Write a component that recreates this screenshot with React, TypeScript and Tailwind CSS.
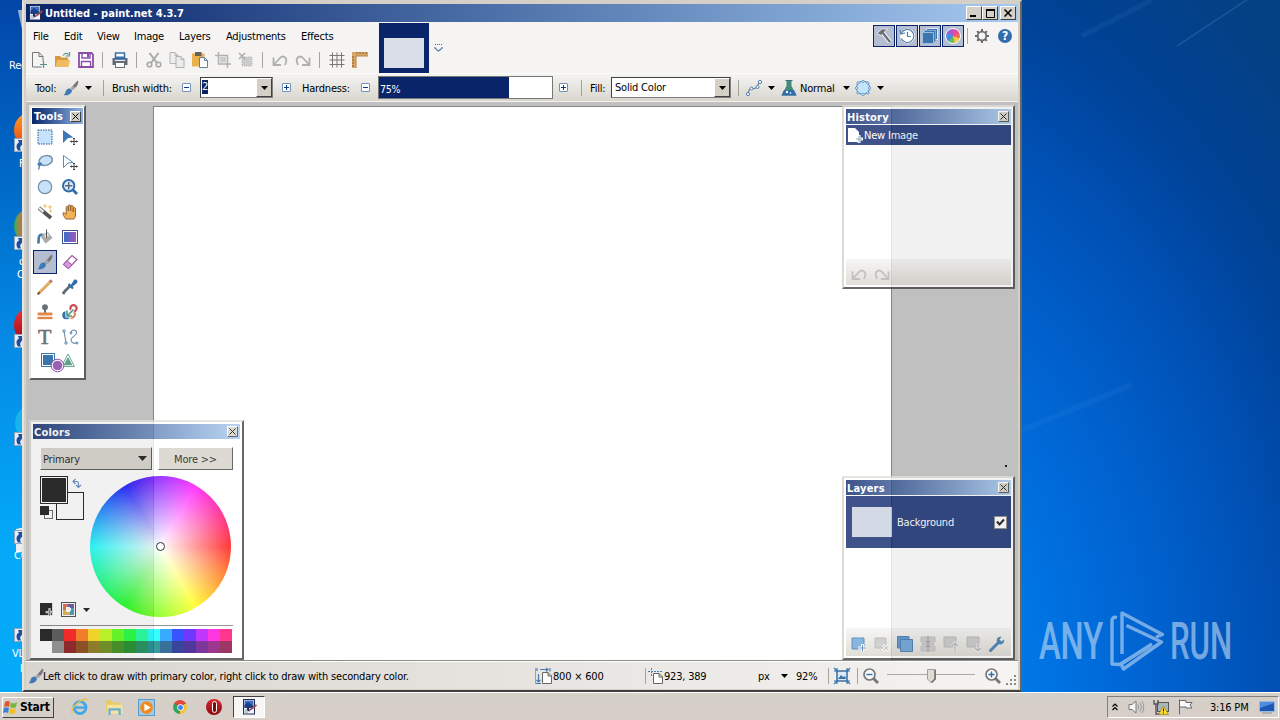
import type { ReactNode } from "react";

type IconProps = { children: ReactNode; size?: number; className?: string };

function Icon({ children, size = 16, className = "" }: IconProps) {
  return (
    <svg width={size} height={size} viewBox="0 0 16 16" fill="none" className={`shrink-0 overflow-visible ${className}`}>
      {children}
    </svg>
  );
}

/* ---------- shared icons ---------- */

function BrushIcon() {
  return (
    <Icon>
      <path d="M8 8 L14.5 0.5 L15.5 2 L14 6 L9.8 10 Z" fill="#77777a" />
      <path d="M8.2 8.2 L10 6 L12 8 L9.8 10 Z" fill="#a9a9a9" />
      <path d="M0.5 15 C3 14 2 9 6 8.5 C9 8.5 9.8 11 8 13 C6 15.4 3 15.6 0.5 15 Z" fill="#3f7ab5" />
    </Icon>
  );
}

function UndoIcon() {
  return (
    <Icon>
      <path d="M1.5 5.5 V13 H9 M2 12.5 L8 6 C11 2.8 15 5.5 14.2 9.5 L13 13" stroke="#b0b0b0" strokeWidth="1.8" />
    </Icon>
  );
}

function RedoIcon() {
  return (
    <Icon>
      <path d="M14.5 5.5 V13 H7 M14 12.5 L8 6 C5 2.8 1 5.5 1.8 9.5 L3 13" stroke="#b0b0b0" strokeWidth="1.8" />
    </Icon>
  );
}

function PaintLogo() {
  return (
    <Icon>
      <rect x="2.5" y="0.5" width="11" height="14.5" fill="#f4f6fb" stroke="#222c50" />
      <rect x="3.5" y="1.5" width="9" height="7.5" fill="#3f6fc0" />
      <path d="M3.5 6 L7 3 L12.5 7 V9 H3.5 Z" fill="#1d3f86" />
      <path d="M3.5 11 H8 M3.5 13 H7" stroke="#8d97b5" />
      <path d="M6 9 C8 8 9 10 8.5 12.5 C7 12.5 5.5 11 6 9 Z" fill="#182a5c" />
      <path d="M9 11 L15.5 6" stroke="#a24a4a" strokeWidth="1.6" />
    </Icon>
  );
}

function Arrow() {
  return (
    <svg width="7" height="4" viewBox="0 0 7 4" className="shrink-0">
      <path d="M0 0 H7 L3.5 4 Z" fill="#000" />
    </svg>
  );
}

function Step({ plus = false }: { plus?: boolean }) {
  return (
    <svg width="9" height="9" viewBox="0 0 9 9" className="shrink-0">
      <rect x="0.5" y="0.5" width="8" height="8" rx="0.5" fill="#fff" stroke="#7191c0" />
      <path d={plus ? "M2 4.5 H7 M4.5 2 V7" : "M2 4.5 H7"} stroke="#123a7c" />
    </svg>
  );
}

function Sep() {
  return <div className="flex w-[11px] shrink-0 justify-center"><div className="h-4 w-px bg-[#a5a29b]" /></div>;
}

function Cell({ children }: { children: ReactNode }) {
  return <div className="flex w-[23px] shrink-0 justify-center">{children}</div>;
}

function CloseBox() {
  return (
    <div className="flex size-[11px] shrink-0 items-center justify-center border border-t-white border-l-white border-r-[#404040] border-b-[#404040] bg-[#d4d0c8]">
      <svg width="7" height="7" viewBox="0 0 7 7"><path d="M0.5 0.5 L6.5 6.5 M6.5 0.5 L0.5 6.5" stroke="#000" /></svg>
    </div>
  );
}

/* ---------- top tool bar ---------- */

const menus = [
  { label: "File", width: "w-[31px]" },
  { label: "Edit", width: "w-[33px]" },
  { label: "View", width: "w-[37px]" },
  { label: "Image", width: "w-[45px]" },
  { label: "Layers", width: "w-[47px]" },
  { label: "Adjustments", width: "w-[75px]" },
  { label: "Effects", width: "w-[50px]" },
];

function FileBar() {
  return (
    <div className="flex h-[26px] items-center pl-[2px]">
      <Cell><Icon className="-ml-px"><path d="M10.5 15 H1.5 V0.5 H8 L12 4.5 V9 M8 0.5 V4.5 H12" fill="none" stroke="#777" /><path d="M12.5 9 V16 M9 12.5 H16" stroke="#5f9090" strokeWidth="1.2" /></Icon></Cell>
      <Cell><Icon><path d="M0 4 H5 L6.5 5.5 H13 V15 H0 Z" fill="#d9983c" /><path d="M2 8 H15 L13.5 15 H0.5 Z" fill="#f0bb62" /><path d="M8 3.5 C10 0.8 12 1 13.5 2.5 M14.5 0 V4 H10.5" stroke="#5d9a92" strokeWidth="1.2" /></Icon></Cell>
      <Cell><Icon><path d="M1 1 H13.5 L15 2.5 V15 H1 Z" fill="#fff" stroke="#8b4ca8" strokeWidth="1.8" /><path d="M4 1 V6 H12 V1 M3.5 15 V9.5 H12.5 V15" stroke="#8b4ca8" strokeWidth="1.4" /><path d="M9 2 H11 V5 H9 Z" fill="#8b4ca8" /></Icon></Cell>
      <Sep />
      <Cell><Icon><path d="M0.5 6 H3 V9 H13 V6 H15.5 V13 H0.5 Z" fill="#646b74" /><path d="M3.5 7 V1 H12.5 V7 Z" fill="#fff" stroke="#3a70a8" strokeWidth="1.5" /><path d="M3.5 6 H12.5" stroke="#3a70a8" strokeWidth="3" /><rect x="3.5" y="10.5" width="9" height="5" fill="#fff" stroke="#646b74" /></Icon></Cell>
      <Sep />
      <Cell><Icon><path d="M3.5 1 L11 11 M12.5 1 L5 11" stroke="#a8a8a8" strokeWidth="2" /><circle cx="3.5" cy="12.5" r="2.3" stroke="#a8a8a8" strokeWidth="1.6" /><circle cx="12.5" cy="12.5" r="2.3" stroke="#a8a8a8" strokeWidth="1.6" /></Icon></Cell>
      <Cell><Icon><path d="M1 0.5 H6 L9 3.5 V11.5 H1 Z M6 0.5 V3.5 H9" fill="#eee" stroke="#b4b4b4" /><path d="M7 4.5 H12 L15 7.5 V15.5 H7 Z M12 4.5 V7.5 H15" fill="#ececec" stroke="#b0b0b0" /></Icon></Cell>
      <Cell><Icon><rect y="1.5" width="12.5" height="13" fill="#eab24e" /><path d="M3 0 H9.5 V4 H3 Z" fill="#65615b" /><path d="M7.5 5.5 H12.5 L15.5 8.5 V15.5 H7.5 Z M12.5 5.5 V8.5 H15.5" fill="#fff" stroke="#64819d" /></Icon></Cell>
      <Cell><Icon><path d="M3.5 0 V12 H16 M0 3.5 H12.5 V16" stroke="#b0b0b0" strokeWidth="1.5" /><rect x="5" y="5" width="6" height="5.5" fill="#ccc" /></Icon></Cell>
      <Cell><Icon><rect x="4" y="5" width="10" height="9" fill="#ccc" stroke="#b5b5b5" strokeDasharray="1 1" /><path d="M1 1 L7 7 M7 1 L1 7" stroke="#adadad" strokeWidth="1.5" /></Icon></Cell>
      <Sep />
      <Cell><UndoIcon /></Cell>
      <Cell><RedoIcon /></Cell>
      <Sep />
      <Cell><Icon><path d="M3.5 0.5 V15.5 M8 0.5 V15.5 M12.5 0.5 V15.5 M0.5 3.5 H15.5 M0.5 8 H15.5 M0.5 12.5 H15.5" stroke="#777" /></Icon></Cell>
      <Cell><Icon><path d="M0 0 H16 V4 H4 V16 H0 Z" fill="#dca766" /><path d="M5 0 V2 M8 0 V2 M11 0 V2 M14 0 V2 M0 5 H2 M0 8 H2 M0 11 H2 M0 14 H2" stroke="#7b5936" /><path d="M4 16 V4 H16" stroke="#b88243" /></Icon></Cell>
    </div>
  );
}

function PanelToggles() {
  const box = "flex size-[22px] items-center justify-center border border-[#0a246a] bg-[#b5bdd3]";
  return (
    <div className="flex h-[26px] items-center pt-[1px]">
      <div className="flex gap-px">
        <div className={box}><Icon><path d="M6 4 L14 14" stroke="#fff" strokeWidth="4.4" /><path d="M0.8 5.5 L6 0.8 L11.5 1 L5 7.5 Z" fill="#707173" stroke="#fff" strokeWidth="0.8" /><path d="M6 4 L14 14" stroke="#68727e" strokeWidth="2.4" /></Icon></div>
        <div className={box}><Icon><circle cx="8.5" cy="8" r="6.5" fill="#fff" stroke="#fff" strokeWidth="2" /><path d="M2.5 5 A6.5 6.5 0 1 1 2.3 10.5 M1 2 L2 6 L6 5 M8.5 4 V8.5 H12" stroke="#5480ae" strokeWidth="1.2" /></Icon></div>
        <div className={box}><Icon><path d="M4.5 0.5 H15.5 V11.5 H4.5 Z" fill="#3b75ae" stroke="#dfeaf6" /><path d="M2.5 2.5 H13.5 V13.5 H2.5 Z" fill="#3b75ae" stroke="#7faad3" /><path d="M0.5 4.5 H11.5 V15.5 H0.5 Z" fill="#3b75ae" stroke="#9dbedd" /></Icon></div>
        <div className={box}>
          <div className="size-4 rounded-full border border-white bg-[conic-gradient(#e94a9a_0_60deg,#f2685d_60deg_110deg,#f5c84a_110deg_165deg,#65bd62_165deg_220deg,#438fe0_220deg_290deg,#a55bd1_290deg)]" />
        </div>
      </div>
      <div className="ml-[3px] h-4 w-px bg-[#aaa]" />
      <Icon className="ml-[6px]">
        <circle cx="8" cy="8" r="4.3" stroke="#6c6c6c" strokeWidth="1.8" />
        <path d="M8 1 V3.8 M8 12.2 V15 M1 8 H3.8 M12.2 8 H15 M3.1 3.1 L5 5 M11 11 L12.9 12.9 M12.9 3.1 L11 5 M5 11 L3.1 12.9" stroke="#6c6c6c" strokeWidth="2" />
      </Icon>
      <div className="ml-[8px] flex size-[14px] items-center justify-center rounded-full bg-[#2f6dac] text-[12px] leading-none font-bold text-white">?</div>
    </div>
  );
}

function OptionsBar() {
  const combo = "flex h-[21px] border border-[#808080] border-t-[#404040] border-l-[#404040] bg-white";
  const drop = "flex w-4 items-center justify-center border border-t-white border-l-white border-r-[#404040] border-b-[#404040] bg-[#d4d0c8]";
  return (
    <div className="flex h-[28px] shrink-0 items-center border-t border-[#fcfcfb] bg-linear-to-b from-[#f5f4f2] to-[#d9d6ce] pl-[9px]">
      <span className="w-[28px]">Tool:</span>
      <BrushIcon />
      <div className="ml-[6px] flex w-[13px]"><Arrow /></div>
      <Sep />
      <span className="ml-[3px] w-[70px]">Brush width:</span>
      <Step />
      <div className={`${combo} ml-[9px] w-[73px]`}>
        <div className="flex flex-1 items-start pt-[2px] pl-[1px]"><div className="h-[14px] bg-[#0a246a] text-white">2</div></div>
        <div className={drop}><Arrow /></div>
      </div>
      <div className="ml-[9px]"><Step plus /></div>
      <span className="ml-[11px] w-[59px]">Hardness:</span>
      <Step />
      <div className="ml-[8px] flex h-[23px] w-[175px] border border-[#777]">
        <div className="flex w-[130px] items-center bg-[#0a246a] pl-[1px] text-[10.5px] text-white"><span>75%</span></div>
        <div className="flex-1 bg-white" />
      </div>
      <div className="ml-[6px]"><Step plus /></div>
      <div className="ml-[8px]"><Sep /></div>
      <span className="ml-[3px] w-[21px]">Fill:</span>
      <div className={`${combo} w-[120px]`}>
        <div className="flex-1 pl-[3px] leading-[20px]">Solid Color</div>
        <div className={drop}><Arrow /></div>
      </div>
      <div className="ml-[2px]"><Sep /></div>
      <Icon className="ml-[2px]"><path d="M2 13.5 C3 7 6 9 8.5 8.5 C12 8 11 4 14 2" stroke="#777" strokeWidth="1.2" /><circle cx="2" cy="14" r="1.6" fill="#fff" stroke="#4b80b6" /><circle cx="5.5" cy="8.5" r="1.5" fill="#fff" stroke="#4b80b6" /><circle cx="11.5" cy="7" r="1.5" fill="#fff" stroke="#4b80b6" /><circle cx="14" cy="2" r="1.6" fill="#fff" stroke="#4b80b6" /></Icon>
      <div className="ml-[6px] flex w-[13px]"><Arrow /></div>
      <Icon><path d="M5.5 0.5 H10.5 V6 L15.5 15.5 H0.5 L5.5 6 Z" fill="#438b78" /><path d="M3 10 H13 L15.5 15.5 H0.5 Z" fill="#2f6dac" /><path d="M4.5 0.5 H11.5" stroke="#3f6d8b" /><circle cx="6" cy="12" r="1.2" fill="#fff" /><circle cx="9.5" cy="13" r="0.9" fill="#c5def6" /></Icon>
      <span className="ml-[3px] w-[43px]">Normal</span>
      <Arrow />
      <Icon className="ml-[5px]"><path d="M3 2.5 L8 1 L13 2.5 L15 8 L13 13 L8 14.5 L3 13 L1 8 Z" fill="#c4e4fb" stroke="#4985ba" /><g fill="#e7f4ff" stroke="#4985ba" strokeWidth="0.7"><circle cx="3" cy="3" r="1.2" /><circle cx="8" cy="1.5" r="1.2" /><circle cx="13" cy="3" r="1.2" /><circle cx="14.5" cy="8" r="1.2" /><circle cx="13" cy="13" r="1.2" /><circle cx="8" cy="14.5" r="1.2" /><circle cx="3" cy="13" r="1.2" /><circle cx="1.5" cy="8" r="1.2" /></g></Icon>
      <div className="ml-[6px]"><Arrow /></div>
    </div>
  );
}

/* ---------- tool window ---------- */

const moveCross = (
  <path d="M12 9 V16 M8.5 12.5 H15.5 M11 10 L12 9 L13 10 M11 15 L12 16 L13 15 M9.5 11.5 L8.5 12.5 L9.5 13.5 M14.5 11.5 L15.5 12.5 L14.5 13.5" stroke="#333" strokeWidth="0.9" />
);

const toolIcons: ReactNode[] = [
  <rect x="1" y="1" width="14" height="14" fill="#c7e3fb" stroke="#24578c" strokeDasharray="1.5 1" />,
  <><path d="M1 1 L11.5 8.5 L6 9 L1 14 Z" fill="#3b78b4" />{moveCross}</>,
  <><ellipse cx="8.7" cy="6.5" rx="6.8" ry="4.8" transform="rotate(-15 8.7 6.5)" fill="#c7e3fb" stroke="#7991aa" strokeWidth="1.5" /><path d="M4 9 C0 8.5 0 12 4 11 C6 10.5 3.5 8.5 2.5 10 C2 12 3 13 1.5 15.5" stroke="#4b7fb4" strokeWidth="1.3" /></>,
  <><path d="M1.5 1.5 L11 8.5 L6 9 L1.5 13.5 Z" fill="#fff" stroke="#5b8abc" />{moveCross}</>,
  <circle cx="8" cy="8" r="6.7" fill="#c7e3fb" stroke="#758fa8" strokeWidth="1.2" />,
  <><path d="M10.5 10.5 L15 15" stroke="#2f6dac" strokeWidth="2.8" /><circle cx="6.7" cy="6.7" r="5.7" fill="#dcebfa" stroke="#2f6dac" strokeWidth="2" /><path d="M6.7 3 V10.4 M3 6.7 H10.4" stroke="#596b7f" strokeWidth="1.5" /></>,
  <><path d="M2 4 L14 14" stroke="#555" strokeWidth="3.6" /><path d="M2.2 4.2 L6.5 7.8" stroke="#eee" strokeWidth="2.2" /><path d="M8 0 V4 M6 2 H10 M13 1 V5 M11 3 H15 M12 7 H15 M13.5 5.5 V8.5" stroke="#efc36c" /></>,
  <path d="M4 15 C2 13 0.5 9.5 1 9 C2 8 3.5 9.5 4.2 10.5 V3.5 C4.2 2 6 2 6.3 3.3 V7 V2 C6.5 0.5 8.5 0.5 8.7 2 V7 V2.5 C9 1.2 11 1.2 11.2 2.7 V8 V4.5 C11.8 3 13.4 3.3 13.5 5 V11 C13.5 13 12.5 14 12 15 Z" fill="#f2b256" stroke="#906430" />,
  <><path d="M6 5 L11 3 L15.5 9 L8.5 14.5 L4 8 Z" fill="#aaa" /><path d="M7 6 L10.5 3.5 L12.5 7 L8 9 Z" fill="#ddd" /><path d="M9.5 0.5 V9" stroke="#555" /><path d="M5.5 5.5 C2 5 1.5 8 1.5 14.5" stroke="#3d78ad" strokeWidth="2.6" /></>,
  <><defs><linearGradient id="fade"><stop stopColor="#3b6dc5" /><stop offset="1" stopColor="#a455c5" /></linearGradient></defs><rect x="0.5" y="1.5" width="15" height="13" fill="#fff" stroke="#40518c" /><rect x="2" y="3" width="12" height="10" fill="url(#fade)" /></>,
  null,
  <><path d="M1.5 10.5 L10 1.5 L15 5.5 L6.5 14.5 Z" fill="#fff" stroke="#a156a5" strokeWidth="1.2" /><path d="M1.5 10.5 L5 6.8 L10 10.8 L6.5 14.5 Z" fill="#d79bdc" stroke="#a156a5" /></>,
  <><path d="M1.5 14.5 L14 2" stroke="#d79a4a" strokeWidth="2.8" /><path d="M2.5 13.2 L13.2 2.6" stroke="#f1cd92" /><path d="M13 3 L14.8 1.2" stroke="#bd7974" strokeWidth="3" /><path d="M0.5 15.5 L2.6 13.4" stroke="#4d4d4d" strokeWidth="1.6" /></>,
  <><path d="M8 7 L2.5 12.5 L1 15" stroke="#596b78" strokeWidth="2.8" /><path d="M6.5 5 L11 9.5" stroke="#2f6dac" strokeWidth="2.2" /><path d="M8.5 6.5 L12 1 C14 -0.5 16.5 2 15 4 L10 8 Z" fill="#2f6dac" /></>,
  <><circle cx="8" cy="3.2" r="2.9" fill="#687078" /><path d="M7 5 H9 V9 H7 Z" fill="#687078" /><rect x="0.5" y="8.5" width="15" height="3" rx="1" fill="#e28a4c" /><path d="M0.5 14 H15.5" stroke="#dd8848" strokeWidth="2.4" /></>,
  <><circle cx="11.5" cy="4.3" r="3.1" stroke="#ce4d50" strokeWidth="2.2" /><circle cx="4.3" cy="11.3" r="3.3" fill="#316ead" stroke="#316ead" strokeWidth="1.5" /><path d="M8.5 14 C12 14 14 11 12.5 8.5" stroke="#db8058" strokeWidth="2.2" /><path d="M11.5 5.5 L5.5 11.5 M5 6.5 V12 H10" stroke="#fff" strokeWidth="3.2" /><path d="M11.5 5.5 L5.5 11.5 M5 6.5 V12 H10" stroke="#4b9b85" strokeWidth="1.6" /></>,
  <text x="7.5" y="15" textAnchor="middle" fontSize="22" fontFamily="Liberation Serif, serif" stroke="#707070" strokeWidth="0.5" fill="#707070">T</text>,
  <><path d="M2 2 L4 14 M9 4 C9 0 15 0 14.5 4 C14 7 9 8 9 11 C9 15 14 14 15 14" stroke="#6d8da9" strokeWidth="1.1" /><circle cx="2" cy="2" r="1.2" fill="#fff" stroke="#5184b7" /><circle cx="4" cy="14" r="1.2" fill="#fff" stroke="#5184b7" /><circle cx="9" cy="4" r="1" fill="#fff" stroke="#5184b7" /><circle cx="15" cy="14" r="1" fill="#fff" stroke="#5184b7" /></>,
];

function ToolsPanel() {
  return (
    <div className="absolute top-[3px] left-[3px] flex h-[275px] w-[57px] flex-col border-2 border-t-[#e8e6e1] border-l-[#e8e6e1] border-r-[#5c5c5c] border-b-[#5c5c5c] bg-white p-px">
      <div className="flex h-[16px] items-center justify-between bg-linear-to-r from-[#0a246a] to-[#8fb4e3] pr-[2px] pl-[2px] font-bold tracking-[0.2px] text-white">
        <span>Tools</span>
        <CloseBox />
      </div>
      <div className="grid grid-cols-[25px_25px]">
        {toolIcons.map((icon, i) => (
          <div key={i} className="flex size-[25px] items-center justify-center">
            {icon ? (
              <Icon>{icon}</Icon>
            ) : (
              <div className="flex size-6 shrink-0 items-center justify-center border border-[#0a246a] bg-[#b5bdd3]"><BrushIcon /></div>
            )}
          </div>
        ))}
      </div>
      <svg width="36" height="22" viewBox="0 0 36 22" className="mt-[3px] ml-[9px] shrink-0">
        <rect x="0.5" y="1.5" width="13" height="13" fill="#fff" stroke="#3b75ae" />
        <rect x="2" y="3" width="10" height="10" fill="#3b75ae" />
        <path d="M27 2 L33.5 14.5 H20.5 Z" fill="#fff" stroke="#6ba98f" />
        <path d="M27 5 L31.5 13.2 H22.5 Z" fill="#62a088" />
        <circle cx="16.5" cy="13.5" r="6.3" fill="#fff" stroke="#8e4dab" />
        <circle cx="16.5" cy="13.5" r="4.8" fill="#9960b6" />
      </svg>
    </div>
  );
}

/* ---------- translucent panels ---------- */

type PanelProps = { title: string; place: string; children: ReactNode };

function Panel({ title, place, children }: PanelProps) {
  return (
    <div className={`absolute flex flex-col border-2 border-t-[#e0ded8] border-l-[#d4d0c8] border-r-[#404040] border-b-[#404040] bg-white p-[2px] opacity-[0.78] ${place}`}>
      <div className="flex h-[15px] shrink-0 items-center justify-between bg-linear-to-r from-[#0a246a] to-[#a6caf0] pr-[2px] pl-[1px] font-bold tracking-[0.2px] text-white">
        <span>{title}</span>
        <CloseBox />
      </div>
      {children}
    </div>
  );
}

const paletteTop = [
  "bg-black", "bg-[#404040]", "bg-[#ff0000]", "bg-[#ff6a00]", "bg-[#ffd800]", "bg-[#b6ff00]", "bg-[#4cff00]", "bg-[#00ff21]",
  "bg-[#00ff90]", "bg-[#00ffff]", "bg-[#0094ff]", "bg-[#0026ff]", "bg-[#4800ff]", "bg-[#b200ff]", "bg-[#ff00dc]", "bg-[#ff006e]",
];
const paletteBottom = [
  "bg-white", "bg-[#808080]", "bg-[#7f0000]", "bg-[#7f3300]", "bg-[#7f6a00]", "bg-[#5b7f00]", "bg-[#267f00]", "bg-[#007f0e]",
  "bg-[#007f46]", "bg-[#007f7f]", "bg-[#004a7f]", "bg-[#00137f]", "bg-[#21007f]", "bg-[#57007f]", "bg-[#7f006e]", "bg-[#7f0037]",
];

function ColorsPanel() {
  const button = "flex h-[23px] items-center border border-t-white border-l-white border-r-[#404040] border-b-[#404040] bg-[#d4d0c8]";
  return (
    <Panel title="Colors" place="left-[3px] top-[318px] h-[240px] w-[215px]">
      <div className="flex flex-col pt-[8px] pl-[7px]">
        <div className="flex gap-[6px]">
          <div className={`${button} w-[112px] justify-between pr-[4px] pl-[2px]`}><span>Primary</span><svg width="9" height="5" viewBox="0 0 9 5"><path d="M0 0 H9 L4.5 5 Z" fill="#000" /></svg></div>
          <div className={`${button} w-[75px] justify-center`}><span>More &gt;&gt;</span></div>
        </div>
        <div className="mt-[6px] flex h-[142px]">
          <div className="flex w-[50px] flex-col justify-between">
            <svg width="46" height="46" viewBox="0 0 46 46">
              <rect x="16.5" y="16.5" width="27" height="27" fill="#fff" stroke="#000" />
              <rect x="0.5" y="0.5" width="27" height="27" fill="#fff" stroke="#000" />
              <rect x="2" y="2" width="24" height="24" />
              <path d="M33 5.5 H37 C38.500 5.5 38.500 7 38.500 11.5 M35.500 3 L33 5.500 L35.500 8 M36 9 L38.500 11.500 L41 9" fill="none" stroke="#4f7dc0" strokeWidth="1.2" />
              <rect x="4.5" y="34.5" width="8" height="8" fill="#fff" stroke="#555" />
              <rect x="0" y="30" width="9" height="9" />
            </svg>
            <div className="mb-px flex h-[15px] items-center">
              <svg width="15" height="15" viewBox="0 0 15 15"><rect width="14" height="14" /><path d="M11 6 V15 M6.5 10.5 H15.5" stroke="#fff" strokeWidth="2.6" /><path d="M11 7 V15 M7 10.5 H15" stroke="#333" strokeWidth="0.8" /></svg>
              <svg width="15" height="15" viewBox="0 0 15 15" className="ml-[8px] shrink-0"><rect x="0.5" y="0.5" width="14" height="14" fill="#fff" stroke="#333" /><path d="M2 2 H7 V5 H5 V8 H2 Z" fill="#dc5730" /><path d="M7 2 H13 V6 H9 V5 H7 Z" fill="#4e4394" /><path d="M10 6 H13 V13 H9 V9 H10 Z" fill="#3786af" /><path d="M2 8 H5 V10 H9 V13 H2 Z" fill="#dda738" /></svg>
              <div className="ml-[7px] shrink-0"><Arrow /></div>
            </div>
          </div>
          <div className="flex size-[141px] items-center justify-center rounded-full bg-[radial-gradient(closest-side,#fff,rgba(255,255,255,0)),conic-gradient(from_90deg,#f00,#ff0,#0f0,#0ff,#00f,#f0f,#f00)]">
            <div className="size-[9px] rounded-full border border-black bg-white" />
          </div>
        </div>
        <div className="mt-[7px] h-px w-[193px] bg-[#777]" />
        <div className="mt-[3px] grid w-[192px] grid-cols-16">
          {[...paletteTop, ...paletteBottom].map((color, i) => <div key={i} className={`h-3 ${color}`} />)}
        </div>
      </div>
    </Panel>
  );
}

function HistoryPanel() {
  return (
    <Panel title="History" place="left-[816px] top-[3px] h-[184px] w-[173px]">
      <div className="mt-px flex h-5 items-center bg-[#0a246a] pl-[1px] text-white">
        <Icon><path d="M1 1 H8 L12 5 V15 H1 Z" fill="#fff" /><path d="M12 8 V16 M8.5 12 H16" stroke="#fff" strokeWidth="3" /><path d="M12 9 V15.5 M9 12 H15" stroke="#6097a0" /></Icon>
        <span className="ml-[1px]">New Image</span>
      </div>
      <div className="flex-1" />
      <div className="flex h-[26px] items-center bg-linear-to-b from-[#f5f4f2] to-[#d9d6ce] pt-[3px] pl-[1px]">
        <Cell><UndoIcon /></Cell>
        <Cell><RedoIcon /></Cell>
      </div>
    </Panel>
  );
}

function LayersPanel() {
  return (
    <Panel title="Layers" place="left-[816px] top-[374px] h-[184px] w-[173px]">
      <div className="mt-px flex h-[52px] items-center bg-[#0a246a] pr-[4px] pl-[6px] text-white">
        <div className="h-[30px] w-10 bg-[#c8cfdf]" />
        <span className="ml-[5px] flex-1">Background</span>
        <div className="flex size-[13px] items-center justify-center border border-[#808080] bg-white"><svg width="9" height="9" viewBox="0 0 9 9"><path d="M1 3.5 L3.5 6.5 L8 1.5" fill="none" stroke="#000" strokeWidth="2" /></svg></div>
      </div>
      <div className="flex-1" />
      <div className="flex h-[28px] items-center bg-linear-to-b from-[#f5f4f2] to-[#d9d6ce] pt-[3px] pl-px">
        <Cell><Icon><path d="M1 2 H13 V13 H1 Z" fill="#69a2d5" stroke="#3b75ae" /><path d="M11.5 8 V16 M7.5 12 H15.5" stroke="#fff" strokeWidth="3" /><path d="M11.5 9 V15.5 M8.5 12 H15" stroke="#3b75ae" /></Icon></Cell>
        <Cell><Icon><path d="M1 2 H12 V12 H1 Z" fill="#c3c3c3" stroke="#adadad" /><path d="M9 9 L15 15 M15 9 L9 15" stroke="#f1f1f1" strokeWidth="3" /><path d="M9.5 9.5 L14.5 14.5 M14.5 9.5 L9.5 14.5" stroke="#aaa" /></Icon></Cell>
        <Cell><Icon><path d="M0.5 0.5 H12 V12 H0.5 Z" fill="#448bc8" stroke="#2d6caa" /><path d="M3.5 3.5 H15.5 V15.5 H3.5 Z" fill="#5d9ad1" stroke="#2d6caa" /></Icon></Cell>
        <Cell><Icon><path d="M1 1 H15 V6 H1 Z M1 10 H15 V15 H1 Z" fill="#c5c5c5" stroke="#b4b4b4" /><path d="M8 0 V16 M2 8 H14 M6 5 L8 7 L10 5 M6 11 L8 9 L10 11" stroke="#999" strokeWidth="1.2" /></Icon></Cell>
        <Cell><Icon><path d="M1 1 H13 V11 H1 Z" fill="#c3c3c3" stroke="#adadad" /><path d="M12 15.5 V7 M9 10 L12 7 L15 10" stroke="#f0f0f0" strokeWidth="3" /><path d="M12 15.5 V7 M9 10 L12 7 L15 10" stroke="#aaa" strokeWidth="1.2" /></Icon></Cell>
        <Cell><Icon><path d="M1 1 H13 V11 H1 Z" fill="#c3c3c3" stroke="#adadad" /><path d="M12 7 V15 M9 12 L12 15 L15 12" stroke="#f0f0f0" strokeWidth="3" /><path d="M12 7 V15 M9 12 L12 15 L15 12" stroke="#aaa" strokeWidth="1.2" /></Icon></Cell>
        <Cell><Icon><path d="M1.5 14.5 L9 7" stroke="#2e72ae" strokeWidth="3" strokeLinecap="round" /><path d="M12.5 1 L10.5 3.5 L12.5 5.5 L15 3.5 C16 7 12 10 9 7.5 C6 4 9 0 12.5 1 Z" fill="#2e72ae" /></Icon></Cell>
      </div>
    </Panel>
  );
}

/* ---------- status bar ---------- */

function Magnifier({ plus = false }: { plus?: boolean }) {
  return (
    <Icon>
      <path d="M10 10 L15 15" stroke="#777" strokeWidth="2.8" />
      <circle cx="6.5" cy="6.5" r="5.5" fill="#f8fafc" stroke="#777" strokeWidth="1.7" />
      <path d={plus ? "M3.5 6.5 H9.5 M6.5 3.5 V9.5" : "M3.5 6.5 H9.5"} stroke="#2f6dac" strokeWidth="1.4" />
    </Icon>
  );
}

function StatusBar() {
  return (
    <div className="flex h-[28px] items-center border-t border-white bg-linear-to-r from-[#d9d5cf] to-[#f5f4f2] pl-[2px]">
      <BrushIcon />
      <span className="ml-[-1px] w-[487px]">Left click to draw with primary color, right click to draw with secondary color.</span>
      <Sep />
      <Icon className="ml-[-5px]"><path d="M1 0 V3 M4 1.5 H12 M10 0 L12 1.5 L10 3.5 M14 0 V3.5 M2.5 6 V14 M0.5 12 L2.5 14 L4.5 12 M0 15.5 H5" stroke="#4a7bae" strokeWidth="1.2" /><path d="M6.500 4.500 H12 L15.500 8 V15.500 H6.500 Z M12 4.500 V8 H15.500" fill="#fff" stroke="#666" /></Icon>
      <span className="ml-[1px] w-[87px]">800 × 600</span>
      <Sep />
      <Icon className="ml-[-3px]"><path d="M3.5 0 V8 M0 3.5 H14" stroke="#4a7bae" strokeDasharray="2 1" /><path d="M5.5 5.5 H11 L14.5 9 V15.5 H5.5 Z M11 5.5 V9 H14.5" fill="#fff" stroke="#666" /></Icon>
      <span className="w-[94px]">923, 389</span>
      <span className="w-[23px]">px</span>
      <Arrow />
      <span className="ml-[8px] w-[27px]">92%</span>
      <Sep />
      <Icon><rect x="3" y="3" width="10" height="10" fill="#dceaf8" stroke="#476f98" /><path d="M0 0 L4 4 M16 0 L12 4 M0 16 L4 12 M16 16 L12 12 M3 0 V16 M13 0 V16 M0 3 H16 M0 13 H16" stroke="#3772aa" strokeWidth="1.1" /><path d="M4 11 L7 7 L9 9 L11 8 L12 11 Z" fill="#3772aa" /></Icon>
      <div className="ml-[2px]"><Sep /></div>
      <Magnifier />
      <svg width="88" height="16" viewBox="0 0 88 16" className="ml-[8px]">
        <path d="M0 6.5 H88" stroke="#aaa" />
        <path d="M40.5 1.5 H48.5 V11 L44.5 15 L40.5 11 Z" fill="#dedbd4" stroke="#a09e98" />
        <path d="M48 2 V11 L44.5 14.5" fill="none" stroke="#666" strokeWidth="1.4" />
      </svg>
      <div className="ml-[10px]"><Magnifier plus /></div>
      <svg width="11" height="11" viewBox="0 0 11 11" className="mt-[9px] ml-[5px]" fill="#8c8a84"><path d="M8 0h2v2h-2z M4 4h2v2h-2z M8 4h2v2h-2z M0 8h2v2h-2z M4 8h2v2h-2z M8 8h2v2h-2z" /></svg>
    </div>
  );
}

/* ---------- application window ---------- */

function PaintWindow() {
  const caption = "flex h-[14px] w-4 items-center justify-center border border-t-white border-l-white border-r-[#404040] border-b-[#404040] bg-[#d4d0c8]";
  return (
    <div className="absolute top-0 left-[22px] flex h-[692px] w-[1000px] flex-col border-2 border-t-[#d4d0c8] border-l-[#e6e3dd] border-r-[#6b665e] border-b-[#404040] bg-[#d4d0c8] px-[2px] pt-[2px]">
      <div className="flex h-[18px] shrink-0 items-center bg-linear-to-r from-[#0a246a] to-[#a6caf0] pr-[2px] pl-[1px] text-white">
        <PaintLogo />
        <span className="ml-[2px] flex-1 font-bold tracking-[0px]">Untitled - paint.net 4.3.7</span>
        <div className={caption}><svg width="8" height="8" viewBox="0 0 8 8"><path d="M0 7 H6" stroke="#000" strokeWidth="2" /></svg></div>
        <div className={caption}><svg width="9" height="9" viewBox="0 0 9 9"><path d="M0.5 1 V8.5 H8.5 V1" fill="none" stroke="#000" /><path d="M0 1 H9" stroke="#000" strokeWidth="2" /></svg></div>
        <div className={`${caption} ml-[2px]`}><svg width="8" height="8" viewBox="0 0 8 8"><path d="M0.5 0.5 L7.5 7.5 M7.5 0.5 L0.5 7.5" stroke="#000" strokeWidth="1.5" /></svg></div>
      </div>
      <div className="flex h-[51px] shrink-0 bg-[#f5f4f2]">
        <div className="flex w-[353px] shrink-0 flex-col">
          <div className="flex h-[26px] items-center pt-[2px] pl-[7px]">
            {menus.map((menu) => <span key={menu.label} className={menu.width}>{menu.label}</span>)}
          </div>
          <FileBar />
        </div>
        <div className="mt-px flex h-[50px] w-[50px] shrink-0 justify-center bg-[#0a246a] pt-[15px]">
          <div className="h-[30px] w-10 bg-[#d9dee9]" />
        </div>
        <svg width="9" height="8" viewBox="0 0 9 8" className="mt-[22px] ml-[5px]">
          <path d="M1 0.5 H8" stroke="#456998" strokeDasharray="1 1" />
          <path d="M1 3 V4.2 L4.5 7 L8 4.2 V3" fill="none" stroke="#557db1" strokeWidth="1.2" />
        </svg>
        <div className="ml-auto pr-[6px]"><PanelToggles /></div>
      </div>
      <OptionsBar />
      <div className="h-px shrink-0 bg-[#f4f2ee]" />
      <div className="relative h-[558px] shrink-0 overflow-hidden bg-[#c0c0c0] pt-[4px] pl-[127px]">
        <div className="h-[554px] w-[739px] border border-b-0 border-[#858585] bg-white" />
        <div className="absolute top-[363px] left-[979px] size-[2px] bg-[#222]" />
        <ToolsPanel />
        <ColorsPanel />
        <HistoryPanel />
        <LayersPanel />
      </div>
      <div className="h-px shrink-0 bg-[#8f8d88]" />
      <StatusBar />
    </div>
  );
}

/* ---------- desktop ---------- */

function ShortcutBadge({ place }: { place: string }) {
  return (
    <svg width="14" height="14" viewBox="0 0 14 14" className={`absolute left-[14px] ${place}`}>
      <rect x="0.5" y="0.5" width="13" height="13" fill="#e4eef8" stroke="#8ea5bc" />
      <path d="M4 12.5 C1.500 9 2.500 5.500 5 4.500 L4 2 H11 V8 L8.500 6.500 C6 8 5.500 10 7 12.500 Z" fill="#214b9d" />
    </svg>
  );
}

function DesktopIcons() {
  return (
    <div className="text-white">
      <div className="absolute top-[10px] left-[20px] h-5 w-4 skew-x-12 bg-[#9fb4cc]" />
      <span className="absolute top-[57px] left-[9px]">Recycle</span>
      <div className="absolute top-[112px] left-[14px] size-9 rounded-full bg-linear-to-b from-[#ff9d1c] to-[#e63e19]" />
      <ShortcutBadge place="top-[138px]" />
      <span className="absolute top-[155px] left-[19px]">Firefox</span>
      <div className="absolute top-[208px] left-[14px] size-9 rounded-full bg-linear-to-r from-[#20a45a] to-[#df4a35] to-35%" />
      <ShortcutBadge place="top-[236px]" />
      <span className="absolute top-[253px] left-[19px]">oogle</span>
      <span className="absolute top-[266px] left-[17px]">Chrome</span>
      <div className="absolute top-[307px] left-[14px] size-9 rounded-full bg-linear-to-b from-[#f4323c] to-[#9b0712]" />
      <ShortcutBadge place="top-[334px]" />
      <div className="absolute top-[405px] left-[15px] size-9 rounded-full bg-[#17b4ee]" />
      <ShortcutBadge place="top-[432px]" />
      <div className="absolute top-[526px] left-[16px] h-6 w-7 -skew-y-12 bg-[#e8eef2]" />
      <ShortcutBadge place="top-[530px]" />
      <span className="absolute top-[547px] left-[14px]">CCleaner</span>
      <ShortcutBadge place="top-[628px]" />
      <span className="absolute top-[645px] left-[12px]">VLC</span>
      <span className="absolute top-[658px] left-[20px]">player</span>
    </div>
  );
}

function LightRays() {
  return (
    <svg width="258" height="692" viewBox="0 0 258 692" className="absolute top-0 left-[1022px]" stroke="#8fc4f2" fill="none">
      <path d="M226 -1 L155 46" opacity="0.16" strokeWidth="1.5" />
      <path d="M130 0 L60 36" opacity="0.07" strokeWidth="5" />
      <path d="M0 430 L110 385" opacity="0.06" strokeWidth="6" />
    </svg>
  );
}

function Watermark() {
  return (
    <svg width="200" height="70" viewBox="0 0 200 70" className="absolute top-[609px] left-[1038px] overflow-visible opacity-60" fill="#c3dcf5" fontFamily="Roboto, sans-serif" fontSize="51" fontWeight="500">
      <text x="1" y="50" textLength="64" lengthAdjust="spacingAndGlyphs">ANY</text>
      <text x="132" y="50" textLength="62" lengthAdjust="spacingAndGlyphs">RUN</text>
      <g fill="none" stroke="#c3dcf5" strokeWidth="3.4" strokeLinejoin="round">
        <path d="M79 8.500 C76 7.500 74 9 74 12 V55 L82 55.500 L112 37" />
        <path d="M84 45 V4 L124.500 25.500 L118 28" />
        <path d="M88.500 16.500 L123.500 33 L85.500 60 L83 55 L114 35" />
      </g>
    </svg>
  );
}

function Taskbar() {
  return (
    <div className="flex h-7 shrink-0 items-center border-t border-white bg-linear-to-b from-[#d4d0c8] to-[#d8cec8] pt-px">
      <div className="ml-[2px] flex h-[21px] w-[52px] items-center border border-t-white border-l-white border-r-[#404040] border-b-[#404040] bg-[#d4d0c8]">
        <Icon><path d="M2 3 C4 1.5 6 2 7 3 L6 8 C4 7 3 7 1 8 Z" fill="#e7542b" /><path d="M8 3.5 C11 5 12 4.5 14 3 L13 8 C11 9.5 9 9 7 8 Z" fill="#77b841" /><path d="M0.8 9 C3 8 4 8 6 9 L5 14 C3 13 2 13 0 14 Z" fill="#3b83d2" /><path d="M7 9 C9 10 11 10.5 13 9 L12 14 C9 16 7 15 6 14 Z" fill="#f1c02e" /></Icon>
        <div className="ml-[1px] text-[12px] font-bold">Start</div>
      </div>
      <Icon size={18} className="ml-[17px]"><circle cx="8" cy="8.5" r="5.3" stroke="#45a8e4" strokeWidth="2.6" /><path d="M3 8.5 H13" stroke="#45a8e4" strokeWidth="2.2" /><path d="M1 14 C-1 8 12 -2 15.5 2" stroke="#e8c24c" strokeWidth="1.3" /></Icon>
      <Icon size={18} className="ml-[16px]"><path d="M1 2 H6 L7 4 H14 V13 H1 Z" fill="#e8ca6b" /><path d="M2 6 H15.5 V14 H2 Z" fill="#f5e29b" /><path d="M4 15 V10 H13 V15" stroke="#69afd4" strokeWidth="2" /></Icon>
      <Icon size={17} className="ml-[15px]"><rect x="0.5" y="0.5" width="15" height="15" fill="#a3cae9" stroke="#5e9bc8" /><circle cx="8" cy="8" r="6" fill="#f18a1f" /><path d="M6 4.500 L12 8 L6 11.500 Z" fill="#fff" /></Icon>
      <div className="ml-[18px] flex size-[14px] items-center justify-center rounded-full bg-[conic-gradient(from_-60deg,#df4937_0_120deg,#f3c334_120deg_240deg,#33a35b_240deg)]"><div className="size-[7px] rounded-full border border-white bg-[#4387e8]" /></div>
      <div className="ml-[19px] flex size-[16px] items-center justify-center rounded-full bg-linear-to-b from-[#dd2630] to-[#8d0912]"><div className="h-[12px] w-[5px] rounded-full border border-white bg-[#6f1013]" /></div>
      <div className="ml-[11px] flex h-[22px] w-8 items-center justify-center border border-t-[#404040] border-l-[#404040] border-r-white border-b-white bg-[#f7f6f4]"><PaintLogo /></div>
      <div className="mr-px ml-auto flex h-[22px] w-[172px] items-center border border-t-[#808080] border-l-[#808080] border-r-white border-b-white pl-[4px]">
        <svg width="6" height="8" viewBox="0 0 6 8" className="shrink-0"><path d="M0.5 3.5 L3 1 L5.5 3.5 M0.5 7 L3 4.5 L5.5 7" fill="none" stroke="#000" strokeWidth="1.2" /></svg>
        <Icon className="ml-[10px]"><path d="M1 5.5 H4 L8 2 V14 L4 10.5 H1 Z" fill="#f7f7f7" stroke="#777" /><path d="M10 5.5 Q11.5 8 10 10.5 M12 3.5 Q15 8 12 12.5 M14 2 Q17.5 8 14 14" stroke="#999" /></Icon>
        <Icon className="ml-[9px]"><rect x="4.5" y="3.5" width="11" height="9" fill="#aab7ba" stroke="#555" /><path d="M1 1 V5 H5 V1 M3 5 V15 H7" stroke="#555" strokeWidth="1.4" /><path d="M10.5 7 L15.5 15.5 H5.5 Z" fill="#ffdb2d" stroke="#96811f" strokeWidth="0.7" /><path d="M10.5 9.5 V12.5 M10.5 13.5 V14.5" stroke="#222" /></Icon>
        <Icon className="ml-[8px]"><path d="M2.5 0.5 V15.5 M3 1.5 H9 V3.5 H15 L13 6 L15 9 H9 V8 H3" fill="#fafafa" stroke="#666" /></Icon>
        <span className="ml-[17px] w-[49px]">3:16 PM</span>
        <Icon><rect x="0.5" y="2.5" width="15" height="10" fill="#1e58b7" stroke="#9bb8df" /><path d="M1 9 L15 4 V3 H1 Z" fill="#4c8de0" /><path d="M3 14 H13" stroke="#8491a2" /></Icon>
      </div>
    </div>
  );
}

export default function App() {
  return (
    <div className="flex h-[720px] w-[1280px] cursor-default flex-col overflow-hidden bg-[#d4d0c8] font-['DejaVu_Sans_Condensed','DejaVu_Sans',sans-serif] text-[11px] leading-[14px] tracking-[-0.2px] whitespace-nowrap text-black [&_span]:pt-[2px]">
      <div className="relative h-[692px] shrink-0 overflow-hidden bg-[radial-gradient(ellipse_560px_800px_at_850px_700px,#0088f0_0%,#0078e8_30%,#0062cf_55%,#0050b4_75%,#004296_92%,#044084_110%)]">
        <div className="h-full w-[22px] bg-linear-to-b from-[#0346a8] via-[#058be6] to-[#04aaf8] to-80%" />
        <LightRays />
        <DesktopIcons />
        <Watermark />
        <PaintWindow />
      </div>
      <Taskbar />
    </div>
  );
}
